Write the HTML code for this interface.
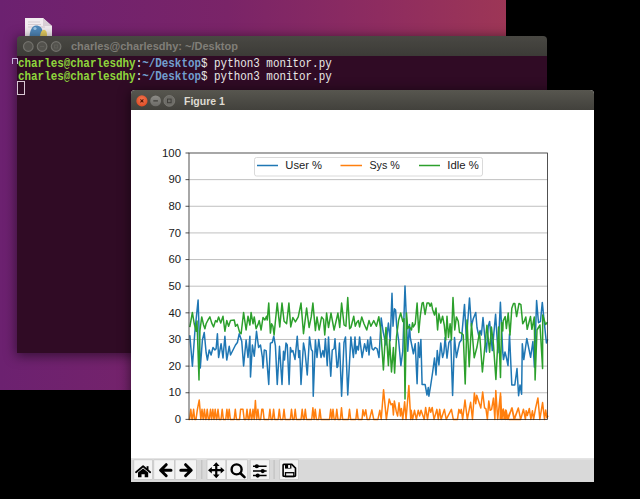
<!DOCTYPE html>
<html><head><meta charset="utf-8">
<style>
*{margin:0;padding:0;box-sizing:border-box}
html,body{width:640px;height:499px;overflow:hidden;background:#000;position:relative}
.abs{position:absolute}
#desk{left:0;top:0;width:506px;height:390px;background:linear-gradient(90deg,#6c2170 0%,#7a2468 45%,#8e2c60 75%,#9d3656 100%)}
#icon{left:25px;top:18px;width:27px;height:20px}
#term{left:17px;top:36px;width:530px;height:317px;border-radius:4px 4px 0 0;overflow:hidden;box-shadow:0 2px 12px 1px rgba(0,0,0,0.5)}
#ttitle{left:0;top:0;width:530px;height:20px;background:linear-gradient(#494843,#3c3b37)}
#tbody{left:0;top:20px;width:530px;height:297px;background:#300b25}
#ttext{left:54px;top:4.2px;font:bold 11px "Liberation Sans",sans-serif;color:#807e78;white-space:nowrap}
.tl{left:1px;font:bold 10.9px "Liberation Mono",monospace;white-space:pre;color:#e0e0dd;line-height:12px;transform:scaleY(1.18);transform-origin:0 0}
.g{color:#8fd53c}.b{color:#729fcf}.w{color:#e8e8e6;font-weight:normal}
#fig{left:131px;top:90px;width:463px;height:392px;border-radius:4px 4px 0 0;overflow:hidden;background:#fff;box-shadow:0 2px 12px 1px rgba(0,0,0,0.5)}
#ftitle{left:0;top:0;width:463px;height:20px;background:linear-gradient(#57564f,#42413c)}
#ftext{left:53px;top:4.6px;font:bold 10.5px "Liberation Sans",sans-serif;color:#dfdbd2;white-space:nowrap}
</style></head><body>
<div id="desk" class="abs"></div>
<svg id="icon" class="abs" viewBox="0 0 27 20" width="27" height="20">
  <path d="M0 0 H18 L27 8 V20 H0 Z" fill="#f2ecf0"/>
  <path d="M18 0 V8 H27 Z" fill="#d9cfd6"/>
  <path d="M3 4 H15 M3 6.5 H16 M3 9 H20" stroke="#d6ccd2" stroke-width="1"/>
  <path d="M4.5 20 C4.5 13 7 7.5 11 7.5 C15 7.5 17.5 10 17.5 14 L17.5 20 Z" fill="#5189bb"/>
  <circle cx="10" cy="10.5" r="1.6" fill="#9cc4e6"/>
  <path d="M15 20 C15 14.5 17 11.7 19 11.7 C21 11.7 22 14 22 17 L22 20Z" fill="#e6cf62"/>
</svg>
<div id="term" class="abs">
  <div id="ttitle" class="abs">
    <svg class="abs" style="left:0;top:0" width="60" height="20" viewBox="17 36 60 20">
      <g fill="#53524d" stroke="#72716c" stroke-width="1.2">
        <circle cx="28.3" cy="46.5" r="4.8"/><circle cx="42.1" cy="46.5" r="4.8"/><circle cx="56.1" cy="46.5" r="4.8"/>
      </g>
      <g stroke="#5f5e59" stroke-width="1" fill="none"><path d="M40 46.5H44.2"/><rect x="54.6" y="45" width="3" height="3"/></g>
    </svg>
    <div id="ttext" class="abs">charles@charlesdhy: ~/Desktop</div>
  </div>
  <div id="tbody" class="abs">
    <div class="abs tl" style="top:0.3px"><span class="g">charles@charlesdhy</span><span class="w">:</span><span class="b">~/Desktop</span><span class="w">$ python3 monitor.py</span></div>
    <div class="abs tl" style="top:12.5px"><span class="g">charles@charlesdhy</span><span class="w">:</span><span class="b">~/Desktop</span><span class="w">$ python3 monitor.py</span></div>
    <div class="abs" style="left:0px;top:25px;width:8px;height:14px;border:1px solid #d8c8d4"></div>
  </div>
</div>
<div class="abs" style="left:12px;top:58px;width:5.5px;height:6px;border:1.8px solid #c9b6de;border-bottom:none;border-radius:1px 1px 0 0"></div>
<div id="fig" class="abs">
  <div id="ftitle" class="abs">
    <svg class="abs" style="left:0;top:0" width="60" height="20" viewBox="131 90 60 20">
      <defs><radialGradient id="cg" cx="50%" cy="40%" r="60%"><stop offset="0" stop-color="#f47a55"/><stop offset="1" stop-color="#df4a22"/></radialGradient>
      <linearGradient id="gg" x1="0" y1="0" x2="0" y2="1"><stop offset="0" stop-color="#8d8c87"/><stop offset="1" stop-color="#6b6a66"/></linearGradient></defs>
      <circle cx="141.9" cy="100.9" r="5.6" fill="url(#cg)"/>
      <path d="M140.4 99.4L143.4 102.4M143.4 99.4L140.4 102.4" stroke="#5a1a08" stroke-width="1.1"/>
      <circle cx="155.6" cy="100.9" r="5.4" fill="url(#gg)"/>
      <path d="M153.3 100.9H157.9" stroke="#3e3d39" stroke-width="1.2"/>
      <circle cx="169.3" cy="100.9" r="5.4" fill="#6d6c67" stroke="#7d7c77" stroke-width="0.8"/>
      <rect x="167.5" y="99.1" width="3.6" height="3.6" fill="none" stroke="#3e3d39" stroke-width="1"/>
    </svg>
    <div id="ftext" class="abs">Figure 1</div>
  </div>
  <svg class="abs" style="left:0;top:20px" width="463" height="348" viewBox="131 110 463 348">
<g stroke="#b0b0b0" stroke-width="0.8"><line x1="189.0" x2="547.6" y1="392.76" y2="392.76"/><line x1="189.0" x2="547.6" y1="366.12" y2="366.12"/><line x1="189.0" x2="547.6" y1="339.48" y2="339.48"/><line x1="189.0" x2="547.6" y1="312.84" y2="312.84"/><line x1="189.0" x2="547.6" y1="286.20" y2="286.20"/><line x1="189.0" x2="547.6" y1="259.56" y2="259.56"/><line x1="189.0" x2="547.6" y1="232.92" y2="232.92"/><line x1="189.0" x2="547.6" y1="206.28" y2="206.28"/><line x1="189.0" x2="547.6" y1="179.64" y2="179.64"/></g>
<g fill="none" stroke-width="1.5" stroke-linejoin="round" stroke-linecap="square">
<polyline stroke="#1f77b4" points="189.90,336.00 192.40,366.30 194.90,331.25 198.10,300.00 200.30,368.00 202.40,340.00 204.25,332.50 206.10,352.50 207.40,360.00 209.25,350.00 211.10,355.00 213.00,347.50 214.90,350.00 216.10,348.75 217.40,333.75 218.60,357.50 221.10,343.75 223.00,358.00 224.90,336.25 226.75,360.00 229.25,346.25 230.50,355.00 233.00,350.00 235.50,345.00 237.40,342.50 239.25,333.75 241.75,341.25 243.60,366.00 246.10,340.00 248.00,357.50 249.90,336.25 250.50,376.90 252.40,345.00 254.25,356.25 256.50,331.25 258.60,347.50 260.50,345.00 262.40,357.50 263.00,368.00 264.25,350.00 266.10,350.60 268.75,384.40 270.40,343.10 272.25,342.50 273.75,336.25 275.40,345.60 277.25,384.40 279.50,346.25 282.00,384.40 283.50,351.25 284.50,360.00 286.00,343.10 287.25,345.00 289.10,384.40 290.40,347.50 291.60,351.90 292.90,350.60 295.00,359.40 297.25,336.25 298.75,357.50 299.75,350.60 301.00,384.40 303.50,343.10 305.00,351.25 307.25,375.00 309.50,336.90 311.25,349.40 312.50,351.25 313.25,396.25 315.40,340.00 317.00,357.50 318.75,339.40 321.00,357.50 322.90,350.60 324.10,356.90 325.40,338.75 327.25,365.60 328.50,336.90 330.75,376.25 332.25,350.00 334.10,348.75 335.00,338.75 337.00,367.50 337.90,366.25 339.50,343.10 341.60,396.25 344.00,342.50 345.50,336.90 347.75,395.00 350.90,336.90 353.40,357.50 355.00,336.90 355.90,353.75 357.10,346.25 358.40,350.00 359.60,336.90 362.10,357.50 364.60,343.75 366.50,351.25 367.75,340.00 369.00,355.00 370.50,336.90 372.10,348.75 373.40,350.00 375.25,347.50 377.10,348.75 379.00,357.50 381.20,317.90 383.00,331.00 386.00,345.00 388.40,323.00 390.20,340.70 392.00,293.20 393.00,326.30 394.40,308.80 395.60,310.00 396.80,327.50 398.60,340.00 400.90,365.60 402.75,351.25 405.00,286.00 407.75,351.25 409.50,324.50 410.25,337.50 413.40,353.75 415.25,343.75 417.10,383.75 418.40,342.50 419.60,357.50 420.90,339.40 422.10,384.40 425.10,384.40 427.00,395.00 428.25,387.50 428.90,396.25 430.75,385.00 432.60,372.50 434.50,358.10 436.00,375.00 437.25,350.60 438.90,365.00 440.75,343.10 442.60,357.50 443.90,352.50 445.10,337.50 447.00,358.10 448.90,342.50 450.75,340.00 452.60,395.60 454.50,337.50 456.40,357.50 459.50,342.50 461.40,340.00 464.50,304.40 466.40,340.00 469.50,298.00 471.40,326.25 473.25,318.75 475.75,312.50 477.00,327.50 478.90,336.25 480.10,330.60 481.40,335.00 483.00,317.50 484.50,333.75 486.40,352.00 488.25,326.25 489.60,321.40 492.30,350.60 495.60,314.20 498.00,352.70 500.40,302.20 502.80,352.70 503.50,359.60 505.00,352.00 506.50,358.00 508.00,365.60 509.50,334.00 511.80,385.00 514.80,385.00 517.00,368.60 518.60,395.70 520.00,385.00 521.60,394.20 522.30,343.80 523.80,359.60 526.80,338.50 530.60,357.30 532.90,341.50 534.40,367.10 536.60,300.50 538.50,322.70 540.40,321.70 542.30,302.40 544.10,320.80 546.40,343.00 547.50,340.00"/>
<polyline stroke="#ff7f0e" points="189.40,419.40 189.65,419.40 190.80,409.30 191.95,419.40 192.45,419.40 193.60,409.30 194.75,419.40 196.00,419.40 197.40,409.30 199.25,400.00 200.80,419.40 200.85,419.40 202.00,409.30 203.15,419.40 203.25,419.40 204.40,409.30 205.55,419.40 206.05,419.40 207.20,409.30 208.35,419.40 209.35,419.40 210.50,409.30 211.65,419.40 211.65,419.40 212.80,409.30 213.95,419.40 214.05,419.40 215.20,409.30 216.35,419.40 216.85,419.40 218.00,409.30 219.15,419.40 221.05,419.40 222.20,409.30 223.35,419.40 225.75,419.40 226.90,409.30 228.05,419.40 229.20,409.30 230.35,419.40 234.15,419.40 235.30,409.30 236.45,419.40 239.60,419.40 240.60,409.30 243.00,409.30 244.20,419.40 245.85,419.40 247.00,409.30 248.15,419.40 249.05,419.40 250.20,409.30 251.35,419.40 251.85,419.40 253.00,409.30 254.15,419.40 254.20,419.40 255.40,400.60 256.60,419.40 256.75,419.40 257.90,409.30 259.05,419.40 260.70,419.40 261.80,409.30 263.00,409.30 264.10,419.40 268.75,419.40 269.90,409.30 271.05,419.40 272.45,419.40 273.60,409.30 274.75,419.40 278.15,419.40 279.30,409.30 280.45,419.40 282.85,419.40 284.00,409.30 285.15,419.40 290.35,419.40 291.50,409.30 292.65,419.40 294.05,419.40 295.20,409.30 296.35,419.40 301.05,419.40 302.20,409.30 303.35,419.40 304.15,419.40 305.30,409.30 306.45,419.40 311.75,419.40 312.90,407.70 314.05,419.40 314.10,419.40 315.25,409.30 316.40,419.40 318.75,419.40 319.90,409.30 321.05,419.40 329.55,419.40 330.70,409.30 331.85,419.40 331.85,419.40 333.00,409.30 334.15,419.40 335.65,419.40 336.80,409.30 337.95,419.40 340.35,419.40 341.50,407.70 342.65,419.40 348.35,419.40 349.50,409.30 350.65,419.40 355.85,419.40 357.00,409.30 358.15,419.40 362.00,419.40 362.94,409.84 364.34,415.93 365.75,409.84 367.15,419.40 369.50,419.40 371.84,409.84 373.72,419.40 377.93,419.40 379.81,410.30 381.21,419.40 383.56,389.69 386.37,419.40 389.18,399.06 391.05,404.68 392.46,403.74 393.40,414.99 394.33,400.93 396.21,411.24 397.61,415.93 399.02,402.81 400.43,415.93 401.36,408.43 402.77,419.40 404.64,401.87 406.05,419.40 408.86,385.47 410.73,419.40 411.20,410.30 412.61,419.40 414.48,410.30 416.36,419.40 418.23,410.30 419.64,415.93 421.04,410.30 424.22,419.40 425.62,407.49 427.50,419.40 429.37,407.49 430.78,412.18 432.18,407.49 434.06,419.40 436.87,409.37 438.28,419.40 439.68,409.37 441.09,419.40 444.37,409.37 446.24,419.40 451.40,409.37 453.27,419.40 457.49,419.40 458.89,409.37 460.30,413.12 461.24,409.37 462.64,419.40 464.99,400.00 467.33,419.40 470.61,402.34 472.48,419.40 474.36,392.97 475.76,403.74 476.70,395.31 479.41,403.74 480.81,407.96 482.69,392.03 484.56,407.96 485.97,408.90 487.37,419.40 488.78,400.93 490.18,410.30 491.59,409.37 493.46,398.12 494.87,419.40 495.81,390.62 497.68,419.40 500.49,392.97 501.90,419.40 503.30,408.90 505.18,419.40 506.12,410.30 507.99,419.40 511.74,407.96 514.08,419.40 518.30,407.96 520.64,419.40 500.20,419.00 500.80,396.00 501.50,419.00 503.10,409.20 504.20,419.00 505.70,410.00 507.10,419.00 512.11,408.05 514.45,419.38 518.36,408.05 520.70,419.38 523.44,409.22 525.39,419.38 526.17,410.78 527.34,415.47 529.30,408.44 530.86,419.38 532.42,410.78 533.59,419.38 535.55,408.44 537.89,397.89 539.84,419.38 542.58,402.58 544.53,419.38 545.70,410.00 546.88,417.81 547.66,416.25"/>
<polyline stroke="#2ca02c" points="189.90,326.30 192.40,312.50 194.25,323.75 196.10,331.25 197.00,321.00 199.00,380.00 199.90,331.00 201.75,316.90 203.60,325.00 204.90,328.75 206.10,323.75 208.00,320.00 209.90,316.90 211.75,323.10 213.60,326.90 215.50,320.60 217.00,321.90 218.60,316.90 220.75,323.10 223.00,316.25 224.90,331.25 226.75,320.60 228.60,326.25 230.50,320.60 234.25,320.00 235.50,326.25 237.40,324.40 239.50,331.90 241.10,333.75 243.60,312.50 246.10,330.00 248.00,316.25 249.90,325.00 251.10,312.50 253.00,323.75 254.25,316.90 256.10,328.75 258.00,324.40 259.25,320.60 261.10,330.00 263.00,317.50 264.90,320.00 266.50,316.25 267.25,320.00 268.75,303.10 270.40,333.10 271.60,323.75 272.90,326.25 274.10,335.00 275.40,321.25 277.25,303.10 279.75,326.90 282.00,303.10 284.10,321.25 286.60,323.75 288.90,303.10 290.75,326.90 292.90,317.50 295.40,321.90 298.25,316.90 301.00,303.10 303.50,333.75 306.60,308.10 309.10,327.50 311.25,316.90 312.90,303.10 315.40,330.60 317.00,316.90 319.10,330.00 321.60,316.90 323.50,319.40 324.75,335.00 326.60,313.10 328.50,327.50 331.00,313.10 334.10,330.00 337.90,313.10 339.75,327.50 341.60,303.10 344.10,325.00 345.90,326.25 347.75,297.50 349.60,328.75 350.90,327.50 353.75,316.25 355.25,326.25 356.75,322.50 358.40,320.60 359.60,326.90 361.75,316.90 364.00,323.75 366.75,330.00 369.00,320.60 370.90,326.25 373.75,320.60 376.40,326.30 378.80,316.70 380.60,328.75 383.40,370.00 385.25,337.50 386.00,327.50 388.40,365.60 389.60,340.00 391.50,371.90 393.40,347.50 394.60,373.10 396.50,336.90 398.60,320.30 400.70,313.00 402.80,321.50 404.00,318.75 405.00,399.00 406.50,313.00 407.75,328.75 409.00,326.25 411.50,330.00 412.50,322.70 413.40,326.90 415.25,323.75 417.10,303.10 418.75,332.50 420.25,316.25 422.10,303.10 423.25,302.50 425.10,314.40 427.00,303.10 428.90,303.10 430.10,306.25 431.40,303.10 432.60,309.40 434.50,315.00 436.00,308.10 437.60,330.00 438.90,313.75 440.75,323.10 442.60,316.25 444.25,325.00 445.75,340.00 447.00,316.25 448.50,337.50 450.10,323.75 451.40,340.00 453.00,297.50 454.75,330.00 456.40,316.90 458.25,321.25 459.50,332.50 461.40,333.10 463.25,335.00 465.20,384.00 467.00,319.90 469.20,366.80 471.50,323.50 474.20,357.80 477.00,347.00 479.50,332.00 482.40,372.00 486.90,325.30 489.60,352.30 491.40,327.00 493.50,345.00 495.90,379.40 498.60,327.00 500.50,377.60 501.60,322.60 502.80,331.00 503.20,320.80 505.20,316.60 506.40,328.60 508.20,313.00 510.00,335.00 511.80,308.20 513.50,303.40 514.80,303.40 516.60,316.60 519.00,303.40 520.90,304.60 522.70,323.80 524.40,320.80 525.80,317.00 527.20,329.30 530.50,316.50 531.90,329.30 534.30,317.00 535.10,379.90 537.00,330.00 540.00,325.00 542.60,368.60 542.70,315.10 545.60,324.50 547.00,322.70"/>
</g>
<rect x="189.0" y="153.0" width="358.60" height="266.40" fill="none" stroke="#262626" stroke-width="0.8"/>
<g stroke="#262626" stroke-width="0.8"><line x1="185.5" x2="189.0" y1="419.40" y2="419.40"/><line x1="185.5" x2="189.0" y1="392.76" y2="392.76"/><line x1="185.5" x2="189.0" y1="366.12" y2="366.12"/><line x1="185.5" x2="189.0" y1="339.48" y2="339.48"/><line x1="185.5" x2="189.0" y1="312.84" y2="312.84"/><line x1="185.5" x2="189.0" y1="286.20" y2="286.20"/><line x1="185.5" x2="189.0" y1="259.56" y2="259.56"/><line x1="185.5" x2="189.0" y1="232.92" y2="232.92"/><line x1="185.5" x2="189.0" y1="206.28" y2="206.28"/><line x1="185.5" x2="189.0" y1="179.64" y2="179.64"/><line x1="185.5" x2="189.0" y1="153.00" y2="153.00"/></g>
<g font-family="Liberation Sans" font-size="10" fill="#1a1a1a" text-anchor="end"><text x="181" y="423.10" textLength="6.3" lengthAdjust="spacingAndGlyphs">0</text><text x="181" y="396.46" textLength="12.6" lengthAdjust="spacingAndGlyphs">10</text><text x="181" y="369.82" textLength="12.6" lengthAdjust="spacingAndGlyphs">20</text><text x="181" y="343.18" textLength="12.6" lengthAdjust="spacingAndGlyphs">30</text><text x="181" y="316.54" textLength="12.6" lengthAdjust="spacingAndGlyphs">40</text><text x="181" y="289.90" textLength="12.6" lengthAdjust="spacingAndGlyphs">50</text><text x="181" y="263.26" textLength="12.6" lengthAdjust="spacingAndGlyphs">60</text><text x="181" y="236.62" textLength="12.6" lengthAdjust="spacingAndGlyphs">70</text><text x="181" y="209.98" textLength="12.6" lengthAdjust="spacingAndGlyphs">80</text><text x="181" y="183.34" textLength="12.6" lengthAdjust="spacingAndGlyphs">90</text><text x="181" y="156.70" textLength="19.0" lengthAdjust="spacingAndGlyphs">100</text></g>
<rect x="254.5" y="157.5" width="228" height="18.5" rx="2" fill="#fff" fill-opacity="0.8" stroke="#d0d0d0" stroke-width="0.8"/>
<g stroke-width="1.5"><line x1="257" x2="278" y1="165.5" y2="165.5" stroke="#1f77b4"/><line x1="340.5" x2="362" y1="165.5" y2="165.5" stroke="#ff7f0e"/><line x1="419" x2="440" y1="165.5" y2="165.5" stroke="#2ca02c"/></g>
<g font-family="Liberation Sans" font-size="10.3" fill="#1a1a1a" lengthAdjust="spacingAndGlyphs"><text x="285.3" y="169.3" textLength="36.8" lengthAdjust="spacingAndGlyphs">User %</text><text x="369.4" y="169.3" textLength="30.4" lengthAdjust="spacingAndGlyphs">Sys %</text><text x="447.3" y="169.3" textLength="31.5" lengthAdjust="spacingAndGlyphs">Idle %</text></g>
</svg>
  <svg class="abs" style="left:0;top:368px" width="463" height="24" viewBox="131 458 463 24">
    <rect x="131" y="458" width="463" height="24" fill="#d9d9d9"/>
    <rect x="131" y="458" width="463" height="1.6" fill="#e4e4e4"/>
    <g fill="#f4f4f4" stroke="#c4c4c4" stroke-width="0.7">
      <rect x="133.8" y="459.8" width="18.8" height="19.6"/>
      <rect x="153.8" y="459.8" width="20.6" height="19.6"/>
      <rect x="175.1" y="459.8" width="21.3" height="19.6"/>
      <rect x="207" y="459.8" width="18.8" height="19.6"/>
      <rect x="226.6" y="459.8" width="20.9" height="19.6"/>
      <rect x="250.2" y="459.8" width="19.2" height="19.6"/>
      <rect x="279.7" y="459.8" width="18.8" height="19.6"/>
    </g>
    <g stroke="#bdbdbd" stroke-width="1"><line x1="201.8" x2="201.8" y1="460" y2="479"/><line x1="274.1" x2="274.1" y1="460" y2="479"/></g>
    <g fill="#000" stroke="#000">
      <!-- home -->
      <polyline points="136,472.2 143.1,466.3 150.2,472.2" fill="none" stroke-width="1.8" stroke-linecap="round" stroke-linejoin="round"/>
      <rect x="146.6" y="466.2" width="1.9" height="3.6" stroke="none"/>
      <path d="M138 472.6L143.1 468.6L148.2 472.6V477.3H144.7V474.2H141.5V477.3H138Z" stroke="none"/>
      <!-- back -->
      <path d="M171 470.2H161M166.2 464.7L160.6 470.2L166.2 475.7" fill="none" stroke-width="3" stroke-linecap="round" stroke-linejoin="round"/>
      <!-- forward -->
      <path d="M180.8 470.2H190.8M185.6 464.7L191.2 470.2L185.6 475.7" fill="none" stroke-width="3" stroke-linecap="round" stroke-linejoin="round"/>
      <!-- move -->
      <path d="M210 470.2H222.5M216.25 464V476.5" fill="none" stroke-width="2.2"/>
      <path d="M216.25 462.2L212.9 466H219.6Z M216.25 478.2L212.9 474.4H219.6Z M208 470.2L211.8 466.9V473.5Z M224.5 470.2L220.7 466.9V473.5Z" stroke="none" stroke-linejoin="round"/>
      <!-- zoom -->
      <circle cx="236.6" cy="469.4" r="5" fill="none" stroke-width="2.4"/>
      <path d="M240.4 473.2L244.5 477.1" stroke-width="2.6" stroke-linecap="round"/>
      <!-- config -->
      <path d="M253 466.25H266.6M253 471.1H266.6M253 475.6H266.6" stroke-width="1.5"/>
      <circle cx="256.8" cy="466.25" r="2.1" stroke="none"/><circle cx="262.7" cy="471.1" r="2.1" stroke="none"/><circle cx="257.7" cy="475.6" r="2.1" stroke="none"/>
      <!-- save -->
      <path d="M283.8 464.4H291.8L295.5 468.1V475.6Q295.5 476.3 294.8 476.3H283.8Q283.1 476.3 283.1 475.6V465.1Q283.1 464.4 283.8 464.4Z" fill="none" stroke-width="1.6"/>
      <rect x="285" y="464.3" width="6.4" height="4.3" stroke="none"/>
      <rect x="288.1" y="465.1" width="2" height="2.8" fill="#fff" stroke="none"/>
      <rect x="285.5" y="472.7" width="8.3" height="4" fill="none" stroke-width="1.3"/>
    </g>
  </svg>
</div>
</body></html>
